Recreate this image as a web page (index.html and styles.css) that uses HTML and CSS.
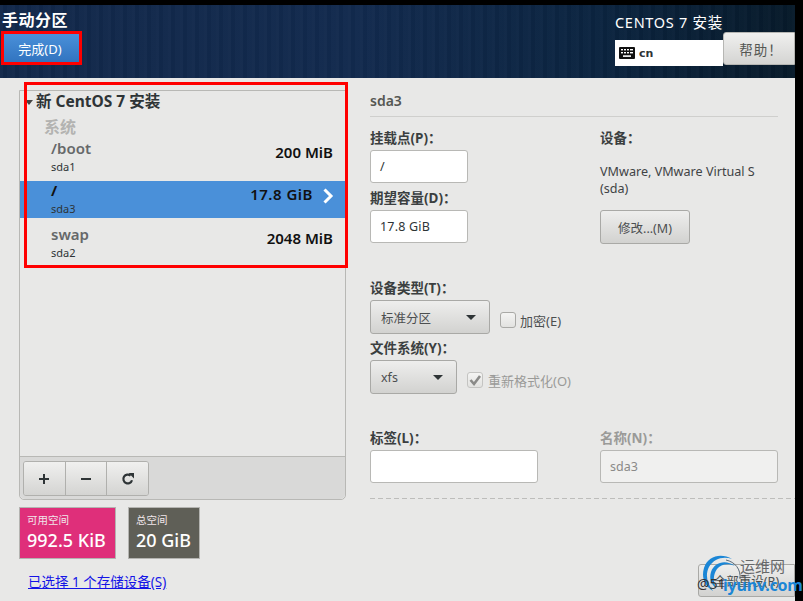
FILE: index.html
```html
<!DOCTYPE html>
<html lang="zh-CN">
<head>
<meta charset="utf-8">
<title>手动分区</title>
<link rel="stylesheet" href="styles.css">
</head>
<body>
<div class="screen">
  <header class="header">
    <div class="header-left">
      <h1 class="title">手动分区</h1>
      <button class="done">完成(D)</button>
    </div>
    <div class="header-right">
      <div class="product">CENTOS 7 安装</div>
      <div class="header-controls">
        <div class="kbd">
          <svg class="kbd-icon" viewBox="0 0 16 12" width="16" height="12"><rect width="16" height="12" rx="1" fill="#111"/><g fill="#fff"><rect x="2" y="2" width="2" height="1.4"/><rect x="5" y="2" width="2" height="1.4"/><rect x="8" y="2" width="2" height="1.4"/><rect x="11" y="2" width="3" height="1.4"/><rect x="2" y="5" width="2" height="1.4"/><rect x="5" y="5" width="2" height="1.4"/><rect x="8" y="5" width="2" height="1.4"/><rect x="11" y="5" width="3" height="1.4"/><rect x="4" y="8.3" width="8" height="1.6"/></g></svg>
          <span>cn</span>
        </div>
        <button class="help">帮助！</button>
      </div>
    </div>
  </header>
  <main class="content">
    <section class="left">
      <div class="panel">
        <div class="tree">
          <div class="tree-head"><span class="arrow"></span>新 CentOS 7 安装</div>
          <div class="group">系统</div>
          <div class="row row-first">
            <div><div class="mount">/boot</div><div class="dev">sda1</div></div>
            <div class="size">200 MiB</div>
          </div>
          <div class="row selected">
            <div><div class="mount">/</div><div class="dev">sda3</div></div>
            <div class="size">17.8 GiB</div>
            <svg class="chev" viewBox="0 0 12 16" width="12" height="16"><path d="M2.5 1.5 L9 8 L2.5 14.5" fill="none" stroke="#fff" stroke-width="3"/></svg>
          </div>
          <div class="row row-last">
            <div><div class="mount">swap</div><div class="dev">sda2</div></div>
            <div class="size">2048 MiB</div>
          </div>
        </div>
        <div class="toolbar">
          <div class="tools">
            <button class="tool"><svg viewBox="0 0 12 12" width="12" height="12"><path d="M6 1v10M1 6h10" stroke="#2e3436" stroke-width="2"/></svg></button>
            <button class="tool"><svg viewBox="0 0 12 12" width="12" height="12"><path d="M1 6h10" stroke="#2e3436" stroke-width="2"/></svg></button>
            <button class="tool"><svg viewBox="0 0 14 14" width="14" height="14"><path d="M11 8.2A4.4 4.4 0 1 1 9.6 3.6" fill="none" stroke="#2e3436" stroke-width="2.2"/><path d="M7.6 1 L13 1 L13 6.4 Z" fill="#2e3436"/></svg></button>
          </div>
        </div>
      </div>
      <div class="stats">
        <div class="stat free"><div class="stat-label">可用空间</div><div class="stat-value">992.5 KiB</div></div>
        <div class="stat total"><div class="stat-label">总空间</div><div class="stat-value">20 GiB</div></div>
      </div>
      <a class="storage-link" href="#">已选择 1 个存储设备(S)</a>
    </section>
    <section class="right">
      <div class="part-title">sda3</div>
      <div class="cols top-cols">
        <div class="col-a">
          <label class="lbl">挂载点(P)：</label>
          <div class="input w98">/</div>
          <label class="lbl lbl-next">期望容量(D)：</label>
          <div class="input w98 pad-wide">17.8 GiB</div>
        </div>
        <div class="col-b">
          <label class="lbl">设备：</label>
          <p class="device">VMware, VMware Virtual S<br>(sda)</p>
          <button class="btn modify">修改...(M)</button>
        </div>
      </div>
      <label class="lbl type-lbl">设备类型(T)：</label>
      <div class="inline">
        <button class="btn select w120"><span>标准分区</span><i class="caret"></i></button>
        <span class="check"></span><span class="check-text">加密(E)</span>
      </div>
      <label class="lbl fs-lbl">文件系统(Y)：</label>
      <div class="inline">
        <button class="btn select w87"><span>xfs</span><i class="caret"></i></button>
        <span class="check checked"><svg viewBox="0 0 14 14" width="14" height="14"><path d="M2.5 7 L6 11 L12 3" fill="none" stroke="#8a8a88" stroke-width="2.6"/></svg></span><span class="check-text muted wide-gap">重新格式化(O)</span>
      </div>
      <div class="cols label-cols">
        <div class="col-a">
          <label class="lbl">标签(L)：</label>
          <div class="input w168"></div>
        </div>
        <div class="col-b">
          <label class="lbl muted">名称(N)：</label>
          <div class="input w178 disabled">sda3</div>
        </div>
      </div>
      <div class="dash"></div>
      <div class="bottom"><button class="btn reset">全部重设(R)</button></div>
    </section>
  </main>
  <div class="mark mark-done"></div>
  <div class="mark mark-list"></div>
  <div class="wm">
    <svg class="wm-logo" viewBox="0 0 46 42" width="46" height="42"><path d="M33 5 C23 -1 9 1 5 14 C2 24 6 32 14 37 C8 29 6 21 10 13 C15 4 25 2 33 5 Z" fill="#1b86d6"/><path d="M36 12 C27 5 15 8 12 18 C10 25 12 30 17 34 C14 27 14 21 18 15 C22 10 29 9 36 12 Z" fill="#1b86d6"/><path d="M27 6 C36 8 42 15 41 25" fill="none" stroke="#5a6a78" stroke-width="1"/></svg>
    <span class="wm-cn">运维网</span>
    <span class="wm-51">@51</span>
    <span class="wm-en">iyunv.com</span>
  </div>
</div>
</body>
</html>
```
FILE: styles.css
```css
* { box-sizing: border-box; }
html, body { margin: 0; padding: 0; }
body { background: #000; }
.screen {
  position: relative;
  width: 803px;
  height: 601px;
  overflow: hidden;
  padding: 5px 8px 0 0;
  background: #000;
  font-family: "Noto Sans", "Noto Sans CJK SC", sans-serif;
  color: #2e3436;
  font-size: 13px;
}
button { font-family: inherit; margin: 0; }

.header {
  height: 73px;
  display: flex;
  justify-content: space-between;
  background:
    repeating-linear-gradient(90deg, rgba(255,255,255,.018) 0 3px, rgba(0,0,0,.03) 3px 7px, rgba(255,255,255,.01) 7px 12px),
    linear-gradient(90deg, #12284a 0%, #122a4e 45%, #0b2440 75%, #071a2a 100%);
}
.header-left { padding: 7px 0 0 2px; }
.title {
  margin: 0 0 5px;
  font-size: 16px;
  line-height: 17px;
  font-weight: 700;
  color: #fff;
  letter-spacing: .5px;
}
.done {
  display: block;
  margin-left: 2px;
  width: 75px;
  height: 28px;
  border: 0;
  padding: 0 3px 0 0;
  background: linear-gradient(#4a90d9, #3174c0);
  color: #fff;
  font-size: 13px;
}
.header-right { width: 180px; display: flex; flex-direction: column; }
.product {
  margin: 6px 0 0;
  height: 18px;
  line-height: 22px;
  font-size: 14.5px;
  color: #fff;
  letter-spacing: .7px;
}
.header-controls { display: flex; margin-top: 3px; }
.kbd {
  width: 108px;
  height: 26px;
  margin-top: 8px;
  background: #fff;
  display: flex;
  align-items: center;
  padding-left: 4px;
  gap: 4px;
  color: #2e3436;
  font-family: "DejaVu Sans", sans-serif;
  font-size: 11px;
  font-weight: 700;
}
.kbd-icon { display: block; }
.help {
  width: 72px;
  height: 33px;
  border: 1px solid #b6b6b3;
  border-radius: 3px 0 0 3px;
  background: linear-gradient(#f0f0ef, #d4d4d2);
  color: #555753;
  font-size: 13.5px;
  letter-spacing: 1px;
  padding: 0 0 0 4px;
}

.content {
  height: 523px;
  background: #e8e8e7;
  display: flex;
}
.left { width: 370px; padding: 12px 0 0 19px; }
.panel {
  width: 327px;
  height: 410px;
  border: 1px solid #b8b8b5;
  border-radius: 0 0 5px 5px;
  display: flex;
  flex-direction: column;
}
.tree { flex: 1; }
.tree-head {
  position: relative;
  height: 21px;
  padding-left: 16px;
  font-size: 15.5px;
  line-height: 21px;
  font-weight: 700;
  color: #2e3436;
  white-space: nowrap;
}
.arrow {
  position: absolute;
  left: 5px;
  top: 9px;
  border: 4px solid transparent;
  border-top: 5px solid #444;
  border-bottom: 0;
}
.group {
  height: 16px;
  margin-top: 7px;
  padding-left: 24px;
  font-size: 16px;
  line-height: 16px;
  font-weight: 700;
  color: #b3b3b1;
}
.row {
  height: 50px;
  padding: 0 12px 3px 31px;
  display: flex;
  justify-content: space-between;
  align-items: center;
  position: relative;
}
.row-first { height: 46px; }
.row-last { padding-bottom: 1px; }
.row.selected { height: 37px; background: #4a90d9; }
.mount { font-size: 15px; line-height: 19px; font-weight: 600; color: #66686a; }
.dev { font-size: 11px; line-height: 15px; margin-top: 1px; color: #2e3436; }
.selected .mount { color: #111; font-weight: 700; }
.size { font-size: 15px; font-weight: 600; color: #111; margin-bottom: 9px; }
.selected .size { margin: 0 20px 8px 0; letter-spacing: .5px; }
.chev { position: absolute; right: 11px; top: 7px; }
.toolbar {
  height: 43px;
  background: #d9d9d8;
  border-top: 1px solid #b8b8b5;
  border-radius: 0 0 5px 5px;
  padding: 4px 0 0 3px;
}
.tools {
  display: flex;
  width: 126px;
  height: 35px;
  border: 1px solid #b0b0ad;
  border-radius: 3px;
  overflow: hidden;
}
.tool {
  flex: 1;
  border: 0;
  border-right: 1px solid #b0b0ad;
  padding: 0;
  background: linear-gradient(#f0f0ef, #d4d4d2);
  display: flex;
  align-items: center;
  justify-content: center;
}
.tool:last-child { border-right: 0; }
.stats { display: flex; gap: 12px; margin-top: 7px; }
.stat {
  height: 52px;
  border: 1px solid #b4b4b1;
  color: #fff;
  padding: 5px 7px 0;
}
.free { width: 97px; background: #df2f7a; }
.total { width: 72px; background: #5f5f57; }
.stat-label { font-size: 10.5px; line-height: 15px; color: #f0e6ea; }
.stat-value { font-size: 18px; line-height: 24px; font-weight: 500; white-space: nowrap; }
.storage-link {
  display: inline-block;
  margin: 15px 0 0 9px;
  font-size: 13.5px;
  line-height: 16px;
  color: #1414e6;
  text-decoration: underline;
}

.right { width: 425px; padding-top: 14px; }
.part-title {
  width: 408px;
  height: 25px;
  border-bottom: 1px solid #cfcfcd;
  font-size: 14px;
  line-height: 18px;
  font-weight: 600;
  color: #555753;
}
.lbl {
  display: block;
  height: 21px;
  font-size: 13.5px;
  line-height: 18px;
  font-weight: 700;
  color: #3b3f40;
  white-space: nowrap;
}
.muted { color: #9a9a98; }
.lbl-next { margin-top: 6px; }
.fs-lbl { margin-top: 5px; }
.cols { display: flex; }
.col-a { width: 230px; }
.top-cols { margin-top: 12px; height: 115px; }
.input {
  height: 33px;
  background: #fff;
  border: 1px solid #b8b8b5;
  border-radius: 3px;
  padding-left: 9px;
  font-size: 12.5px;
  line-height: 31px;
  color: #2e3436;
}
.w98 { width: 98px; }
.w168 { width: 168px; }
.w178 { width: 178px; }
.pad-wide { letter-spacing: .2px; }
.disabled { background: #f0f0ef; color: #8a8a88; }
.device {
  margin: 13px 0 13px;
  font-size: 12.6px;
  line-height: 17px;
  color: #3f4345;
  white-space: nowrap;
}
.btn {
  display: block;
  height: 34px;
  border: 1px solid #a9a9a6;
  border-radius: 3px;
  background: linear-gradient(#eeeeed, #d2d2d0);
  color: #4c4f50;
  font-size: 12.5px;
  padding: 0;
}
.modify { width: 90px; }
.type-lbl { margin-top: 35px; }
.inline { display: flex; align-items: center; }
.select {
  display: flex;
  justify-content: space-between;
  align-items: center;
  padding: 0 13px 0 10px;
  flex: none;
}
.w120 { width: 120px; }
.w87 { width: 87px; }
.caret {
  border: 5px solid transparent;
  border-top: 5px solid #2e3436;
  border-bottom: 0;
  width: 0;
}
.check {
  width: 16px;
  height: 16px;
  margin: 6px 4px 0 10px;
  border: 1px solid #a9a9a6;
  border-radius: 3px;
  background: linear-gradient(#f4f4f3, #e2e2e0);
  display: flex;
  align-items: center;
  justify-content: center;
}
.check.checked { border-color: #c4c4c2; }
.check-text { font-size: 13px; margin-top: 7px; color: #4c4f50; }
.check-text.muted { color: #9a9a98; }
.wide-gap { margin-left: 1px; }
.label-cols { margin-top: 35px; }
.dash {
  width: 425px;
  height: 1px;
  margin-top: 15px;
  background: repeating-linear-gradient(90deg, #bdbdbb 0 5px, transparent 5px 8px);
}
.bottom { display: flex; justify-content: flex-end; margin-top: 65px; }
.reset { width: 97px; height: 33px; border-radius: 3px 0 0 3px; }

.mark { position: absolute; border: 3px solid #f00; }
.mark-done { left: 1px; top: 31px; width: 81px; height: 34px; }
.mark-list { left: 24px; top: 82px; width: 324px; height: 186px; }

.wm { position: absolute; left: 695px; top: 553px; width: 108px; height: 48px; }
.wm-logo { position: absolute; left: 4px; top: 1px; }
.wm-cn { position: absolute; left: 45px; top: 5px; font-size: 15px; line-height: 17px; color: #66686a; }
.wm-51 { position: absolute; left: 2px; top: 21px; font-size: 14px; color: #333; }
.wm-en { position: absolute; left: 28px; top: 22px; font-size: 16px; font-weight: 700; line-height: 20px; letter-spacing: -.2px; color: #1b86d6; white-space: nowrap; }
```
